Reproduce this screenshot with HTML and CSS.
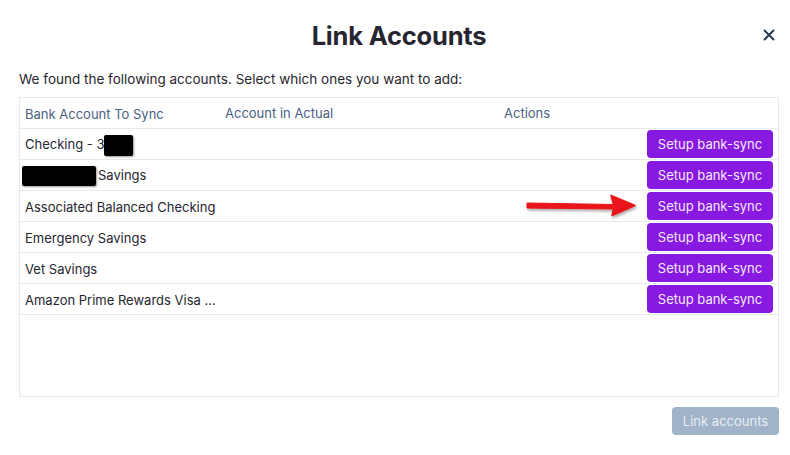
FILE: index.html
```html
<!DOCTYPE html>
<html>
<head>
<meta charset="utf-8">
<link rel="stylesheet" href="styles.css">
</head>
<body>
<div class="modal">
  <div class="header">
    <h1 class="title">Link Accounts</h1>
    <button class="close" aria-label="Close">
      <svg width="12" height="12" viewBox="0 0 12 12"><path d="M1.5 1.5 L10.5 10.5 M10.5 1.5 L1.5 10.5" stroke="#243b53" stroke-width="2" stroke-linecap="round"/></svg>
    </button>
  </div>
  <p class="intro">We found the following accounts. Select which ones you want to add:</p>
  <div class="table">
    <div class="row head">
      <div class="c1">Bank Account To Sync</div>
      <div class="c2">Account in Actual</div>
      <div class="h3">Actions</div>
    </div>
    <div class="row">
      <div class="c1">Checking - 3<span class="redact r1"></span></div>
      <div class="c2"></div>
      <div class="c3"><button class="sync">Setup bank-sync</button></div>
    </div>
    <div class="row">
      <div class="c1"><span class="redact r2"></span>Savings</div>
      <div class="c2"></div>
      <div class="c3"><button class="sync">Setup bank-sync</button></div>
    </div>
    <div class="row">
      <div class="c1">Associated Balanced Checking</div>
      <div class="c2"></div>
      <div class="c3 arrowcell">
        <svg class="arrow" width="120" height="28" viewBox="0 0 120 28">
          <defs><filter id="sh" x="-10%" y="-50%" width="130%" height="200%"><feDropShadow dx="1" dy="2" stdDeviation="1.5" flood-color="#000" flood-opacity="0.35"/></filter></defs>
          <g filter="url(#sh)">
            <path d="M4 11 L90 12.5 L90 17 L4 16 Z" fill="#e8141a" stroke="#e8141a" stroke-width="1" stroke-linejoin="round"/>
            <path d="M88 3.5 L112 13.5 L89 23.5 L91 14 Z" fill="#e8141a" stroke="#e8141a" stroke-width="1.5" stroke-linejoin="round"/>
          </g>
        </svg>
        <button class="sync">Setup bank-sync</button>
      </div>
    </div>
    <div class="row">
      <div class="c1">Emergency Savings</div>
      <div class="c2"></div>
      <div class="c3"><button class="sync">Setup bank-sync</button></div>
    </div>
    <div class="row">
      <div class="c1">Vet Savings</div>
      <div class="c2"></div>
      <div class="c3"><button class="sync">Setup bank-sync</button></div>
    </div>
    <div class="row">
      <div class="c1">Amazon Prime Rewards Visa ...</div>
      <div class="c2"></div>
      <div class="c3"><button class="sync">Setup bank-sync</button></div>
    </div>
  </div>
  <div class="footer">
    <button class="link" disabled>Link accounts</button>
  </div>
</div>
</body>
</html>
```
FILE: styles.css
```css
* { box-sizing: border-box; }
html, body { margin: 0; padding: 0; background: #fff; }
body { font-family: Inter, "Noto Sans", sans-serif; color: #272630; }
.modal { width: 790px; height: 455px; padding: 0 11px 0 19px; }
.header { position: relative; height: 70px; display: flex; align-items: center; justify-content: center; }
.title { margin: 0; font-size: 25.5px; font-weight: 700; color: #272630; letter-spacing: -0.2px; padding-left: 0; }
.close { position: absolute; right: 4px; top: 29px; border: 0; background: none; padding: 0; width: 12px; height: 12px; display: flex; }
.intro { margin: 0; font-size: 13.5px; line-height: 17px; color: #272630; height: 27px; padding-top: 1px; }
.table { width: 760px; height: 300px; border: 1px solid #e8e8ee; }
.row { display: grid; grid-template-columns: 200px 279px 1fr; height: 31px; border-bottom: 1px solid #e8e8ee; align-items: center; font-size: 13px; }
.row > div { padding-left: 5px; white-space: nowrap; }
.row .c1 { padding-top: 2px; }
.head { color: #4a6183; height: 31px; }
.c3 { display: flex; justify-content: flex-end; padding-right: 5px; }
.sync { font-family: Inter, "Noto Sans", sans-serif; font-size: 13px; color: #f4eafd; background: #8719e0; border: 0; border-radius: 4px; width: 126px; height: 28px; padding: 0; }
.redact { display: inline-block; background: #000; border-radius: 2px; vertical-align: middle; box-shadow: 1px 1px 2px rgba(0,0,0,0.4); }
.r1 { width: 29px; height: 21px; }
.r2 { width: 74px; height: 20px; margin-left: -3px; margin-right: 2px; }
.arrowcell { position: relative; }
.arrow { position: absolute; left: 24px; top: 0; }
.footer { display: flex; justify-content: flex-end; padding-top: 10px; }
.link { font-family: Inter, "Noto Sans", sans-serif; font-size: 13px; color: #e9eef4; background: #a1b3c8; border: 0; border-radius: 4px; width: 107px; height: 28px; padding: 0; }
```
